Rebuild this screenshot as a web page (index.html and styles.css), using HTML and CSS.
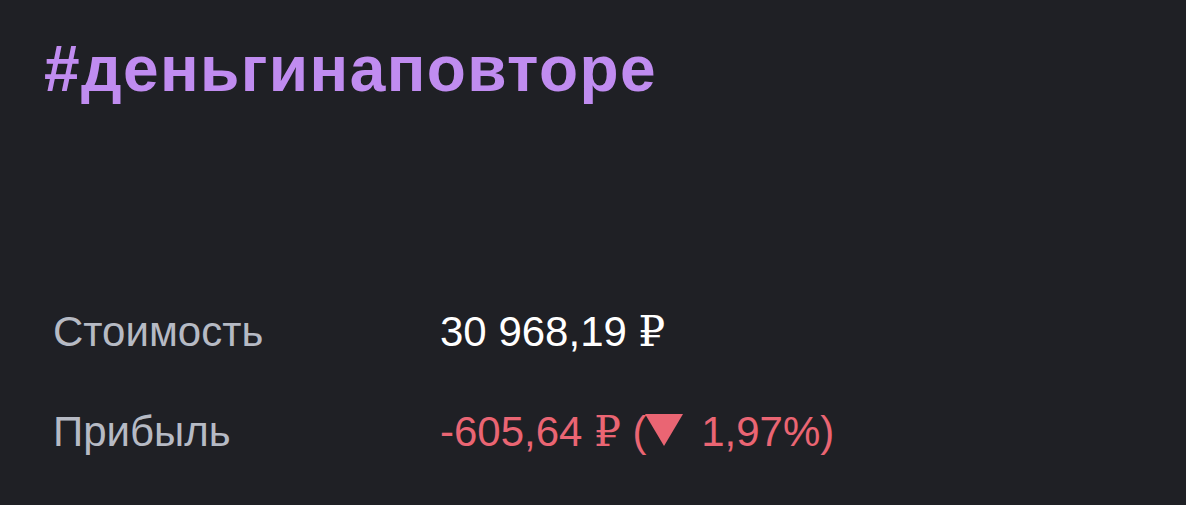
FILE: index.html
```html
<!DOCTYPE html>
<html lang="ru">
<head>
<meta charset="utf-8">
<link rel="stylesheet" href="styles.css">
</head>
<body>
<div class="card">
  <h1 class="title">#деньгинаповторе</h1>
  <div class="rows">
    <div class="row">
      <div class="label">Стоимость</div>
      <div class="value">30 968,19 <span class="rub">₽</span></div>
    </div>
    <div class="row">
      <div class="label">Прибыль</div>
      <div class="value neg">-605,64 <span class="rub">₽</span> (<svg class="tri" width="38" height="32" viewBox="0 0 38 32"><path d="M0 0 H38 L19 32 Z" fill="currentColor"/></svg> 1,97%)</div>
    </div>
  </div>
</div>
</body>
</html>
```
FILE: styles.css
```css
html, body {
  margin: 0;
  padding: 0;
  background: #1f2025;
  width: 1186px;
  height: 505px;
  overflow: hidden;
}
.card {
  font-family: "Liberation Sans", Arial, sans-serif;
  padding: 29px 0 0 44px;
}
.title {
  margin: 0;
  font-size: 64px;
  font-weight: bold;
  line-height: 80px;
  color: #c08cf0;
  letter-spacing: 1.4px;
}
.rows {
  margin-top: 198px;
  padding-left: 9px;
}
.row {
  display: flex;
  height: 100px;
  align-items: flex-start;
}
.label {
  width: 387px;
  font-size: 42px;
  line-height: 50px;
  color: #b6bac4;
}
.value {
  font-size: 42px;
  line-height: 50px;
  color: #ffffff;
}
.neg {
  color: #ea6573;
}
.rub {
  font-family: "Liberation Serif", "DejaVu Serif", serif;
  font-weight: 300;
}
.tri {
  display: inline-block;
  vertical-align: baseline;
  margin: 0 7px 0 -2px;
}
```
